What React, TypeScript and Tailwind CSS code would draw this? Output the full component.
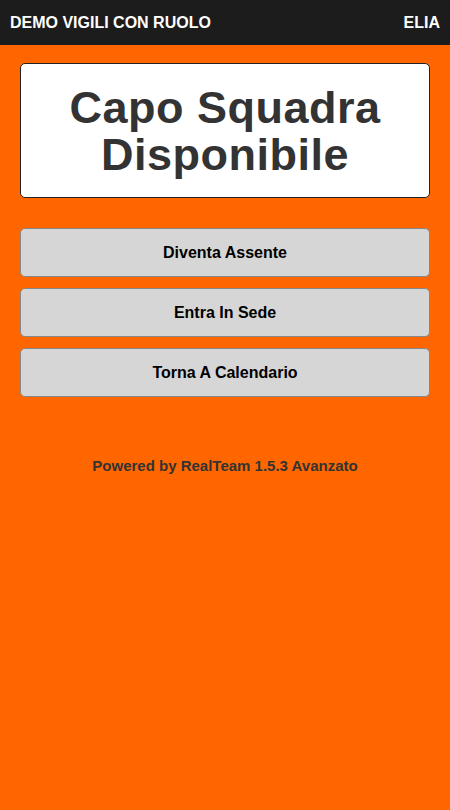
export default function App() {
  const actions = ["Diventa Assente", "Entra In Sede", "Torna A Calendario"];

  return (
    <div
      className="min-h-[810px] bg-[#ff6600]"
      style={{ fontFamily: '"Liberation Sans", Arial, sans-serif' }}
    >
      {/* Header */}
      <div className="h-[45px] bg-[#1c1c1c] flex items-center justify-between px-[10px] text-white font-bold text-[16px]">
        <span>DEMO VIGILI CON RUOLO</span>
        <span>ELIA</span>
      </div>

      <div className="px-5 pt-[18px]">
        {/* Status */}
        <div className="h-[135px] bg-white border border-[#222] rounded-[5px] flex items-center justify-center">
          <h1 className="text-center font-bold text-[#333] text-[45px] leading-[47px] tracking-[0.5px]">
            Capo Squadra
            <br />
            Disponibile
          </h1>
        </div>

        {/* Actions */}
        <div className="mt-[30px] flex flex-col gap-[11px]">
          {actions.map((label) => (
            <button
              key={label}
              className="h-[49px] w-full bg-[#d6d6d6] border border-[#888] rounded-[5px] font-bold text-[16px] text-black"
            >
              {label}
            </button>
          ))}
        </div>

        <p className="mt-[58px] text-center font-bold text-[15px] text-[#333]">
          Powered by RealTeam 1.5.3 Avanzato
        </p>
      </div>
    </div>
  );
}
